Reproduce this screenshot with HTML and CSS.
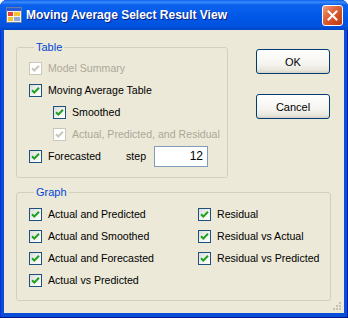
FILE: index.html
```html
<!DOCTYPE html>
<html>

<head>
    <title>Moving Average Select Result View</title>
    <link rel="stylesheet" href="styles.css">
</head>

<body>
    <div class="window">
        <div class="titlebar">
            <svg class="app-icon" width="16" height="16" viewBox="0 0 16 16">
                <rect x="0.5" y="0.5" width="15" height="15" fill="#f4f4f0" stroke="#6b7aa0"/>
                <rect x="1" y="1" width="14" height="3" fill="#2a5ad6"/>
                <rect x="2" y="5" width="5" height="4" fill="#e8423a"/>
                <rect x="8" y="5" width="6" height="4" fill="#f2c230"/>
                <rect x="2" y="10" width="5" height="4" fill="#f2c230"/>
                <rect x="8" y="10" width="6" height="4" fill="#8fa9d8"/>
            </svg>
            <span class="title">Moving Average Select Result View</span>
            <button class="close" type="button">
                <svg width="11" height="11" viewBox="0 0 11 11">
                    <path d="M1.5 1.5 L9.5 9.5 M9.5 1.5 L1.5 9.5" stroke="#fff" stroke-width="2" stroke-linecap="square"/>
                </svg>
            </button>
        </div>

        <div class="client">
            <div class="top">
                <fieldset class="group table-group">
                    <legend>Table</legend>
                    <label class="check disabled">
                        <span class="box"><svg viewBox="0 0 13 13"><path d="M3 6.2 L5.3 8.5 L10 3.8"/></svg></span>Model Summary
                    </label>
                    <label class="check">
                        <span class="box"><svg viewBox="0 0 13 13"><path d="M3 6.2 L5.3 8.5 L10 3.8"/></svg></span>Moving Average Table
                    </label>
                    <label class="check sub">
                        <span class="box"><svg viewBox="0 0 13 13"><path d="M3 6.2 L5.3 8.5 L10 3.8"/></svg></span>Smoothed
                    </label>
                    <label class="check sub disabled">
                        <span class="box"><svg viewBox="0 0 13 13"><path d="M3 6.2 L5.3 8.5 L10 3.8"/></svg></span>Actual, Predicted, and Residual
                    </label>
                    <div class="step-row">
                        <label class="check forecast">
                            <span class="box"><svg viewBox="0 0 13 13"><path d="M3 6.2 L5.3 8.5 L10 3.8"/></svg></span>Forecasted
                        </label>
                        <span class="step-label">step</span>
                        <input class="step-input" type="text" value="12" />
                    </div>
                </fieldset>

                <div class="buttons">
                    <button class="btn" type="button">OK</button>
                    <button class="btn" type="button">Cancel</button>
                </div>
            </div>

            <fieldset class="group graph-group">
                <legend>Graph</legend>
                <div class="graph-grid">
                    <label class="check"><span class="box"><svg viewBox="0 0 13 13"><path d="M3 6.2 L5.3 8.5 L10 3.8"/></svg></span>Actual and Predicted</label>
                    <label class="check"><span class="box"><svg viewBox="0 0 13 13"><path d="M3 6.2 L5.3 8.5 L10 3.8"/></svg></span>Actual and Smoothed</label>
                    <label class="check"><span class="box"><svg viewBox="0 0 13 13"><path d="M3 6.2 L5.3 8.5 L10 3.8"/></svg></span>Actual and Forecasted</label>
                    <label class="check"><span class="box"><svg viewBox="0 0 13 13"><path d="M3 6.2 L5.3 8.5 L10 3.8"/></svg></span>Actual vs Predicted</label>
                    <label class="check"><span class="box"><svg viewBox="0 0 13 13"><path d="M3 6.2 L5.3 8.5 L10 3.8"/></svg></span>Residual</label>
                    <label class="check"><span class="box"><svg viewBox="0 0 13 13"><path d="M3 6.2 L5.3 8.5 L10 3.8"/></svg></span>Residual vs Actual</label>
                    <label class="check"><span class="box"><svg viewBox="0 0 13 13"><path d="M3 6.2 L5.3 8.5 L10 3.8"/></svg></span>Residual vs Predicted</label>
                </div>
            </fieldset>

            <svg class="grip" width="10" height="10" viewBox="0 0 10 10">
                <rect x="7" y="1" width="2" height="2" fill="#c4c1b0"/>
                <rect x="4" y="4" width="2" height="2" fill="#c4c1b0"/>
                <rect x="7" y="4" width="2" height="2" fill="#c4c1b0"/>
                <rect x="1" y="7" width="2" height="2" fill="#c4c1b0"/>
                <rect x="4" y="7" width="2" height="2" fill="#c4c1b0"/>
                <rect x="7" y="7" width="2" height="2" fill="#c4c1b0"/>
            </svg>
        </div>
    </div>
</body>

</html>
```

FILE: styles.css
```css
body {
    margin: 0;
    background: #fff;
    font-family: "Liberation Sans", Arial, sans-serif;
    font-size: 10.6px;
    color: #000;
}

.window {
    width: 348px;
    height: 318px;
    display: flex;
    flex-direction: column;
    background: #0a4ed8;
    border-radius: 7px 7px 0 0;
    box-shadow: inset 0 -1px #00138c, inset 1px 0 #0831d9, inset -1px 0 #001ea0;
    overflow: hidden;
}

/* title bar */
.titlebar {
    height: 30px;
    flex: none;
    display: flex;
    align-items: center;
    padding: 0 5px 0 6px;
    background: linear-gradient(#0a5ff5 0%, #3d8cf8 7%, #0c62ef 16%, #0058e8 55%, #0052dd 88%, #0046c6 100%);
}

.app-icon {
    flex: none;
}

.title {
    margin-left: 4px;
    color: #fff;
    font-weight: bold;
    font-size: 12px;
    text-shadow: 1px 1px #0f1f7c;
}

.close {
    margin-left: auto;
    width: 21px;
    height: 21px;
    padding: 0;
    border: 1px solid #fff;
    border-radius: 3px;
    background: linear-gradient(135deg, #f0a080 0%, #e0693f 35%, #cf4a1f 70%, #c03a14 100%);
    display: grid;
    place-items: center;
}

/* client area */
.client {
    position: relative;
    flex: 1;
    margin: 0 4px 5px;
    padding: 11px 12px 0;
    background: #ece9d8;
}

.top {
    display: flex;
}

.group {
    margin: 0;
    min-width: 0;
    border: 1px solid #d0d0bf;
    border-radius: 3px;
}

.group legend {
    margin-left: 5px;
    padding: 0 2px;
    color: #0046d5;
    font-size: 11px;
    line-height: 13px;
}

.table-group {
    width: 212px;
    flex: none;
    box-sizing: border-box;
    padding: 3px 0 10px 12px;
}

.graph-group {
    margin-top: 8px;
    margin-right: 1px;
    padding: 4px 10px 9px 12px;
}

.check {
    height: 22px;
    display: flex;
    align-items: center;
    white-space: nowrap;
}

.check.sub {
    padding-left: 24px;
}

.check.disabled {
    color: #aca899;
}

.box {
    width: 13px;
    height: 13px;
    box-sizing: border-box;
    margin-right: 6px;
    border: 1px solid #1c5180;
    background: linear-gradient(135deg, #dcdcd7 0%, #f4f4f2 60%, #fff 100%);
    flex: none;
}

.box svg {
    display: block;
    margin: -1px;
    width: 13px;
    height: 13px;
}

.box path {
    fill: none;
    stroke: #21a121;
    stroke-width: 2;
}

.disabled .box {
    border-color: #cac8bb;
    background: #fff;
}

.disabled .box path {
    stroke: #cac8bb;
}

.step-row {
    display: flex;
    align-items: center;
    height: 22px;
}

.check.forecast {
    width: 97px;
}

.step-label {
    width: 28px;
}

.step-input {
    width: 54px;
    height: 21px;
    box-sizing: border-box;
    border: 1px solid #7f9db9;
    padding: 0 4px;
    text-align: right;
    font: inherit;
    font-size: 12px;
    background: #fff;
}

/* buttons */
.buttons {
    display: flex;
    flex-direction: column;
    gap: 20px;
    margin: 8px 0 0 28px;
}

.btn {
    width: 74px;
    height: 25px;
    border: 1px solid #003c74;
    border-radius: 3px;
    background: linear-gradient(#ffffff 0%, #f5f4ef 60%, #e8e6dc 88%, #d6d0c5 100%);
    font: inherit;
    font-size: 11px;
    color: #000;
    padding: 0;
}

.graph-grid {
    display: grid;
    grid-template-columns: 169px auto;
    grid-template-rows: repeat(4, 22px);
    grid-auto-flow: column;
}

.grip {
    position: absolute;
    right: 2px;
    bottom: 2px;
}
```
